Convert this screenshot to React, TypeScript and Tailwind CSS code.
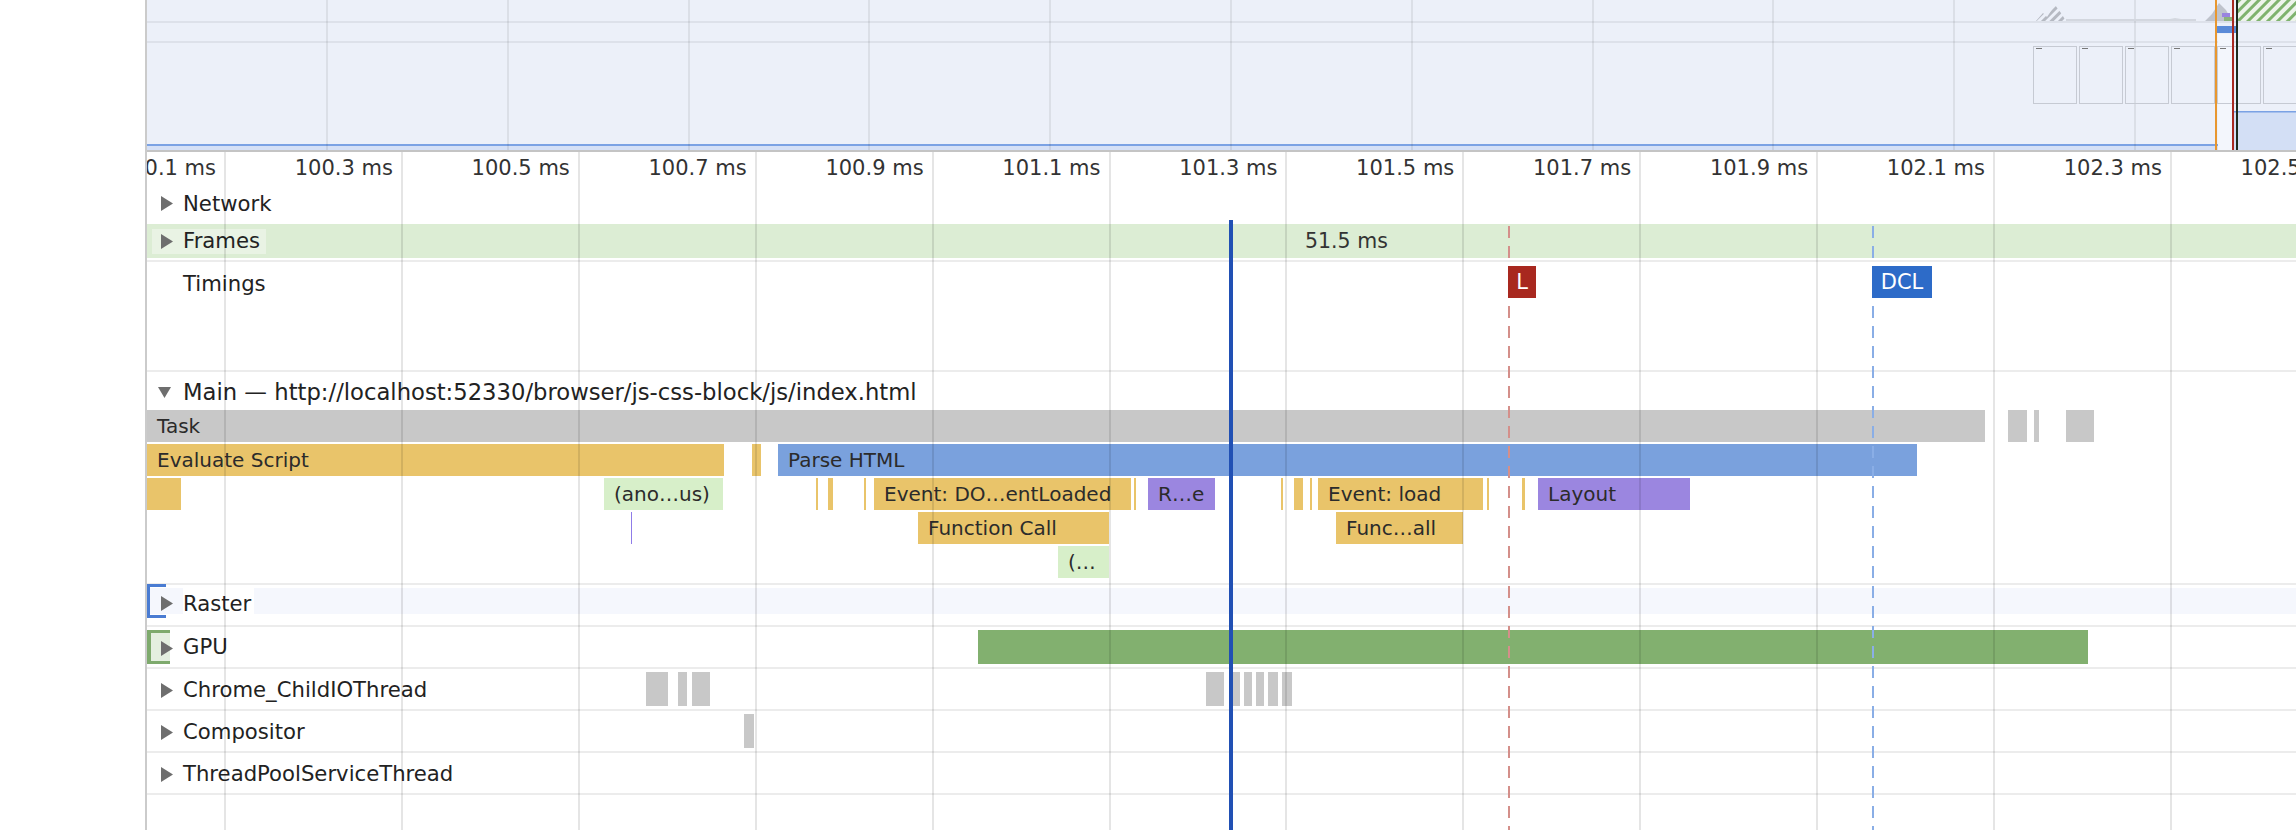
import React from 'react';

// page x of the left edge of the timeline panel
const X0 = 147;
const at = (x: number) => x - X0;

const GRID = Array.from({ length: 12 }, (_, k) => 225 + 176.9 * k);
const OV_GRID = Array.from({ length: 11 }, (_, k) => 327 + 180.8 * k);
const TICKS = Array.from({ length: 13 }, (_, k) => ({
  x: 225 + 176.9 * k,
  label: `${(100.1 + 0.2 * k).toFixed(1)} ms`,
}));

const COLORS = {
  grey: 'bg-[#c8c8c8]',
  yellow: 'bg-[#e9c46a]',
  blue: 'bg-[#7aa1dd]',
  green: 'bg-[#d7efc9]',
  purple: 'bg-[#9b86e0]',
  line: 'bg-[#8f7ce8]',
};

type Kind = keyof typeof COLORS;
type Bar = { x1: number; x2: number; kind: Kind; text?: string };

const FLAME: Bar[][] = [
  [
    { x1: 147, x2: 1985, kind: 'grey', text: 'Task' },
    { x1: 2008, x2: 2027, kind: 'grey' },
    { x1: 2034, x2: 2039, kind: 'grey' },
    { x1: 2066, x2: 2094, kind: 'grey' },
  ],
  [
    { x1: 147, x2: 724, kind: 'yellow', text: 'Evaluate Script' },
    { x1: 752, x2: 761, kind: 'yellow' },
    { x1: 778, x2: 1917, kind: 'blue', text: 'Parse HTML' },
  ],
  [
    { x1: 147, x2: 181, kind: 'yellow' },
    { x1: 604, x2: 723, kind: 'green', text: '(ano…us)' },
    { x1: 816, x2: 817.5, kind: 'yellow' },
    { x1: 828, x2: 833, kind: 'yellow' },
    { x1: 864, x2: 865.5, kind: 'yellow' },
    { x1: 874, x2: 1131, kind: 'yellow', text: 'Event: DO…entLoaded' },
    { x1: 1134, x2: 1135.5, kind: 'yellow' },
    { x1: 1148, x2: 1215, kind: 'purple', text: 'R…e' },
    { x1: 1281, x2: 1282.5, kind: 'yellow' },
    { x1: 1294, x2: 1303, kind: 'yellow' },
    { x1: 1310, x2: 1311.5, kind: 'yellow' },
    { x1: 1318, x2: 1483, kind: 'yellow', text: 'Event: load' },
    { x1: 1487, x2: 1488.5, kind: 'yellow' },
    { x1: 1522, x2: 1525, kind: 'yellow' },
    { x1: 1538, x2: 1690, kind: 'purple', text: 'Layout' },
  ],
  [
    { x1: 631, x2: 632, kind: 'line' },
    { x1: 918, x2: 1109, kind: 'yellow', text: 'Function Call' },
    { x1: 1336, x2: 1463, kind: 'yellow', text: 'Func…all' },
  ],
  [{ x1: 1058, x2: 1109, kind: 'green', text: '(…' }],
];

const Arrow = ({ down }: { down?: boolean }) =>
  down ? (
    <svg width="13" height="11" viewBox="0 0 13 11" className="shrink-0">
      <polygon points="0,0 13,0 6.5,11" fill="#6e6e6e" />
    </svg>
  ) : (
    <svg width="12" height="15" viewBox="0 0 12 15" className="shrink-0">
      <polygon points="0,0 12,7.5 0,15" fill="#6e6e6e" />
    </svg>
  );

const Label = ({ text }: { text: string }) => (
  <span className="whitespace-nowrap text-[21.2px] leading-none text-[#222]">{text}</span>
);

const Sep = () => <div className="h-[2px] shrink-0 bg-[#ececec]" />;

function Overview() {
  return (
    <div className="relative h-[152px] shrink-0 border-b-2 border-[#c4c4c4] bg-[#ecf0f9]">
      <div className="flex h-full flex-col">
        <div className="h-[21px]" />
        <div className="h-[2px] bg-[#dde1ea]" />
        <div className="h-[18px]" />
        <div className="h-[2px] bg-[#dde1ea]" />
        <div className="flex-1" />
        <div className="h-[2px] bg-[#7ba2e4]" />
        <div className="h-[4px] bg-[#d5e0f6]" />
      </div>
      {OV_GRID.map((x) => (
        <div key={x} className="absolute top-0 bottom-0 w-[2px] bg-black/[0.07]" style={{ left: at(x) - 1 }} />
      ))}
      <svg className="pointer-events-none absolute left-0 top-0" width={2149} height={150} viewBox={`${X0} 0 2149 150`}>
        <defs>
          <pattern id="hg" width="7" height="7" patternUnits="userSpaceOnUse" patternTransform="rotate(45)">
            <rect width="7" height="7" fill="#eef4ec" />
            <rect width="3" height="7" fill="#7fb36e" />
          </pattern>
          <pattern id="hgrey" width="6" height="6" patternUnits="userSpaceOnUse" patternTransform="rotate(45)">
            <rect width="3" height="6" fill="#b5b9c2" />
          </pattern>
        </defs>
        <polygon points="2036,21 2043,13 2047,17 2055,5 2061,13 2066,21" fill="url(#hgrey)" />
        <rect x="2066" y="19" width="130" height="2" fill="#d3d7df" />
        <polygon points="2160,21 2175,18 2193,21" fill="#d3d7df" />
        <polygon points="2205,21 2212,14 2219,3 2226,10 2232,21" fill="#bfc3cc" />
        <rect x="2222" y="13" width="8" height="4" fill="#9a84df" />
        <rect x="2224" y="17" width="10" height="4" fill="#8bb37a" />
        <rect x="2238" y="0" width="58" height="21" fill="url(#hg)" />
        <rect x="2216" y="26" width="20" height="7" fill="#5b8bd8" />
        <rect x="2218" y="34" width="14" height="116" fill="#f3f6fc" />
        {[0, 1, 2, 3, 4, 5].map((k) => (
          <g key={k}>
            <rect x={2033.5 + 46 * k} y="46.5" width="43" height="57" fill="none" stroke="#c6cad3" />
            <rect x={2036 + 46 * k} y="48" width="6" height="1" fill="#777" />
          </g>
        ))}
        <rect x="2234" y="111" width="62" height="39" fill="#d3dff5" />
        <rect x="2234" y="111" width="62" height="1.5" fill="#7ba2e4" />
        <rect x="2215" y="0" width="2" height="150" fill="#e8972f" />
        <rect x="2232" y="0" width="2" height="150" fill="#a92a22" />
        <rect x="2236" y="0" width="2" height="150" fill="#1d2b1d" />
      </svg>
    </div>
  );
}

function Ruler() {
  return (
    <div className="relative h-[33px] shrink-0">
      {TICKS.map((t) => (
        <div
          key={t.label}
          className="absolute top-0 flex h-full w-[200px] items-center justify-end text-[21px] leading-none text-[#333]"
          style={{ left: at(t.x) - 9 - 200 }}
        >
          {t.label}
        </div>
      ))}
    </div>
  );
}

function FlameRow({ bars }: { bars: Bar[] }) {
  return (
    <div className="relative h-[32px] shrink-0">
      {bars.map((b, i) =>
        b.text ? (
          <div
            key={i}
            className={`absolute top-0 flex h-full items-center overflow-hidden whitespace-nowrap pl-[10px] text-[20px] leading-none text-[#2b2b2b] ${COLORS[b.kind]}`}
            style={{ left: at(b.x1), width: b.x2 - b.x1 }}
          >
            {b.text}
          </div>
        ) : (
          <div key={i} className={`absolute top-0 h-full ${COLORS[b.kind]}`} style={{ left: at(b.x1), width: b.x2 - b.x1 }} />
        )
      )}
    </div>
  );
}

function ThreadRow({ name, blocks }: { name: string; blocks: [number, number][] }) {
  return (
    <div className="relative flex h-[40px] shrink-0 items-center gap-[10px] pl-[14px] pt-[2px]">
      {blocks.map(([a, b]) => (
        <div key={a} className="absolute top-[3px] h-[34px] bg-[#c8c8c8]" style={{ left: at(a), width: b - a }} />
      ))}
      <Arrow />
      <Label text={name} />
    </div>
  );
}

export default function App() {
  return (
    <div className="flex h-[830px] w-[2296px] overflow-hidden bg-white font-['DejaVu_Sans',sans-serif] text-[#222]">
      <div className="w-[145px] shrink-0 bg-white" />
      <div className="w-[2px] shrink-0 bg-[#cbcbcb]" />
      <div className="relative flex min-w-0 flex-1 flex-col overflow-hidden">
        <Overview />
        <div className="relative flex flex-1 flex-col">
          <Ruler />

          {/* Network */}
          <div className="flex h-[37px] shrink-0 items-center gap-[10px] pl-[14px]">
            <Arrow />
            <Label text="Network" />
          </div>

          {/* Frames */}
          <div className="h-[38px] shrink-0 py-[2px]">
            <div className="relative flex h-full items-center bg-[#dcedd4]">
              <div className="ml-[5px] flex h-[25px] items-center gap-[10px] bg-[#e9f3e4] pl-[9px] pr-[6px]">
                <Arrow />
                <Label text="Frames" />
              </div>
              <span className="absolute left-[1158px] text-[20.5px] leading-none text-[#333]">51.5 ms</span>
            </div>
          </div>
          <Sep />

          {/* Timings */}
          <div className="relative h-[108px] shrink-0">
            <div className="flex h-[40px] items-center pl-[36px] pt-[3px]">
              <Label text="Timings" />
            </div>
            <div className="absolute left-[1361px] top-[4px] z-30 flex h-[32px] w-[28px] items-center justify-center bg-[#a8281f] text-[21px] leading-none text-white">
              L
            </div>
            <div className="absolute left-[1725px] top-[4px] z-30 flex h-[32px] w-[60px] items-center justify-center bg-[#2d6bc8] text-[21px] leading-none text-white">
              DCL
            </div>
          </div>
          <Sep />

          {/* Main thread */}
          <div className="flex h-[38px] shrink-0 items-center gap-[12px] pl-[11px] pt-[3px]">
            <Arrow down />
            <span className="whitespace-nowrap text-[22.7px] leading-none text-[#222]">
              Main — http://localhost:52330/browser/js-css-block/js/index.html
            </span>
          </div>
          <div className="flex shrink-0 flex-col gap-[2px] pb-[5px]">
            {FLAME.map((row, i) => (
              <FlameRow key={i} bars={row} />
            ))}
          </div>
          <Sep />

          {/* Raster */}
          <div className="relative flex h-[40px] shrink-0 items-start">
            <div className="absolute inset-x-0 top-[3px] h-[26px] bg-[#f5f7fd]" />
            <div className="absolute left-[-1px] top-[-1px] h-[34px] w-[20px] border-y-[3px] border-l-4 border-[#4a7cd2]" />
            <div className="relative flex h-[37px] items-center gap-[10px] pl-[14px]">
              <Arrow />
              <span className="flex h-[33px] items-center self-start bg-white pr-[3px] pt-[4px]">
                <Label text="Raster" />
              </span>
            </div>
          </div>
          <Sep />

          {/* GPU */}
          <div className="relative flex h-[40px] shrink-0 items-center gap-[10px] pl-[14px] pt-[3px]">
            <div className="absolute top-[3px] h-[34px] bg-[#82b06f]" style={{ left: at(978), width: 2088 - 978 }} />
            <div className="absolute left-[-1px] top-[3px] h-[34px] w-[24px] border-y-[3px] border-l-[5px] border-[#7eaa6d] bg-[#e4efe0]" />
            <span className="relative">
              <Arrow />
            </span>
            <span className="relative">
              <Label text="GPU" />
            </span>
          </div>
          <Sep />

          <ThreadRow
            name="Chrome_ChildIOThread"
            blocks={[
              [646, 668],
              [678, 687],
              [692, 710],
              [1206, 1224],
              [1233, 1240],
              [1244, 1252],
              [1256, 1264],
              [1268, 1278],
              [1282, 1292],
            ]}
          />
          <Sep />
          <ThreadRow name="Compositor" blocks={[[744, 754]]} />
          <Sep />
          <ThreadRow name="ThreadPoolServiceThread" blocks={[]} />
          <Sep />

          {/* grid lines */}
          <div className="pointer-events-none absolute inset-0 z-10">
            {GRID.map((x) => (
              <div key={x} className="absolute top-0 bottom-0 w-[2px] bg-black/10" style={{ left: at(x) - 1 }} />
            ))}
          </div>

          {/* timing markers */}
          <div className="pointer-events-none absolute bottom-0 left-[1361px] top-[74px] z-20 w-[2px] bg-[repeating-linear-gradient(to_bottom,#d48f8a_0_12px,transparent_12px_20px)]" />
          <div className="pointer-events-none absolute bottom-0 left-[1725px] top-[74px] z-20 w-[2px] bg-[repeating-linear-gradient(to_bottom,#8aaee6_0_12px,transparent_12px_20px)]" />

          {/* cursor */}
          <div className="pointer-events-none absolute bottom-0 left-[1082px] top-[68px] z-30 w-[4px] bg-[#2150b4]" />
        </div>
      </div>
    </div>
  );
}
